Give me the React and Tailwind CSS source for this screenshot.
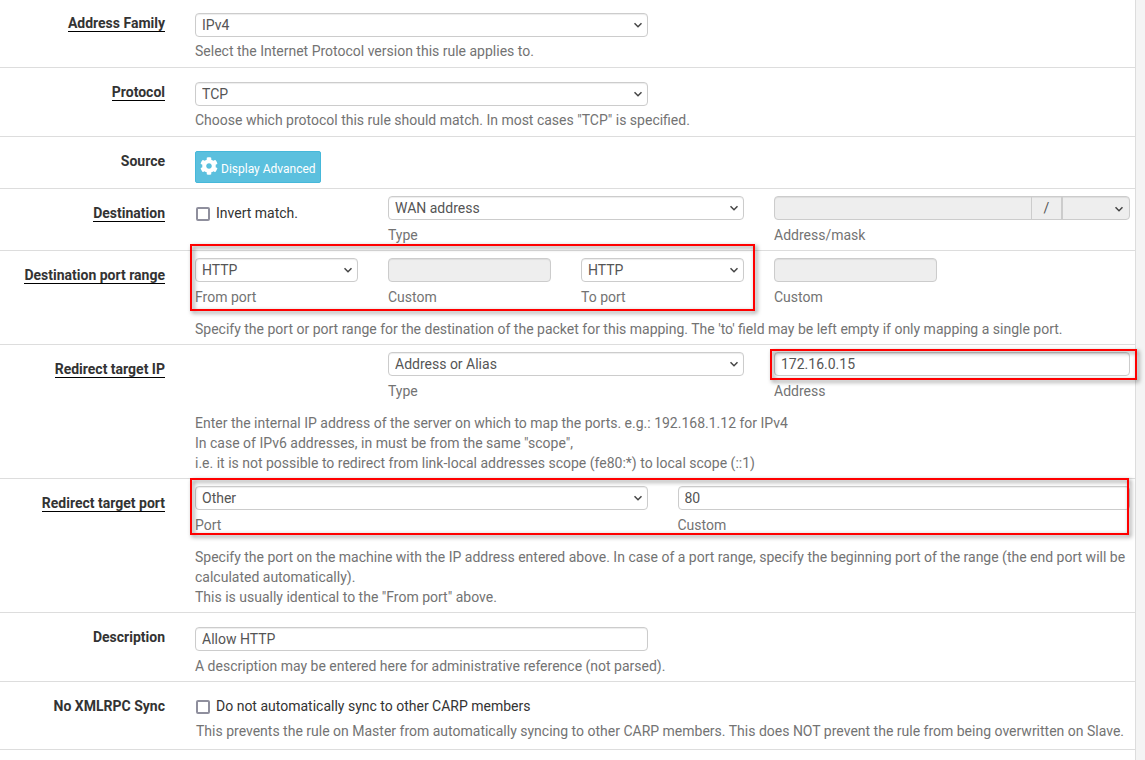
import React from "react";

const fieldBase =
  "block h-6 w-full appearance-none rounded border border-[#ccc] px-1.5 text-sm leading-5 text-[#555] shadow-[inset_0_1px_1px_rgba(0,0,0,0.075)] outline-none";

function Chevron() {
  return (
    <svg
      className="pointer-events-none absolute top-2 right-1.5 h-2 w-2"
      viewBox="0 0 8 8"
      fill="none"
      stroke="#444"
      strokeWidth="1.5"
      aria-hidden="true"
    >
      <path d="M0.5 2.2 L4 5.7 L7.5 2.2" />
    </svg>
  );
}

function Select({ id, value, options, ...rest }) {
  return (
    <div className="relative">
      <select id={id} defaultValue={value} className={`${fieldBase} bg-white`} {...rest}>
        {(options || [value]).map((o) => (
          <option key={o}>{o}</option>
        ))}
      </select>
      <Chevron />
    </div>
  );
}

function Input({ id, disabled, value = "", ...rest }) {
  return (
    <input
      id={id}
      type="text"
      disabled={disabled}
      defaultValue={value}
      className={`${fieldBase} ${disabled ? "bg-[#eee]" : "bg-white"}`}
      {...rest}
    />
  );
}

function Row({ label, htmlFor, required, children, className = "pt-3.5 pb-[5px]" }) {
  const Tag = htmlFor ? "label" : "span";
  return (
    <div className="grid grid-cols-[180px_minmax(0,1fr)] border-b border-[#ddd]">
      <div className="px-[15px] pt-3.5 text-right font-bold text-[#333]">
        <Tag htmlFor={htmlFor} className={required ? "border-b border-black" : ""}>
          {label}
        </Tag>
      </div>
      <div className={`-mr-2.5 ${className}`}>{children}</div>
    </div>
  );
}

function Caption({ htmlFor, children }) {
  return (
    <label htmlFor={htmlFor} className="mt-[5px] block">
      {children}
    </label>
  );
}

function Help({ children }) {
  return <p className="mt-3 px-[15px]">{children}</p>;
}

function Highlight({ className }) {
  return (
    <div
      className={`pointer-events-none absolute z-10 border-2 border-[#f00] drop-shadow-[2px_2px_2px_rgba(0,0,0,0.5)] ${className}`}
    />
  );
}

function Check({ id, children }) {
  return (
    <label htmlFor={id} className="flex items-center gap-1.5 px-4 text-[#333]">
      <input
        id={id}
        type="checkbox"
        className="mt-px size-3.5 shrink-0 appearance-none rounded-[2px] border-2 border-[#8f8f9d] bg-white"
      />
      {children}
    </label>
  );
}

export default function App() {
  return (
    <div className="min-h-screen overflow-hidden bg-[#f4f4f4] pr-[9px] font-['Roboto',sans-serif] text-sm leading-5 text-[#737373]">
      <form className="-mt-px min-h-[calc(100vh+1px)] border-r border-[#ddd] bg-white">
        <Row label="Address Family" htmlFor="family" required>
          <div className="grid grid-cols-10">
            <div className="col-span-5 px-[15px]">
              <Select id="family" value="IPv4" options={["IPv4", "IPv6"]} />
            </div>
          </div>
          <p className="mt-1 px-[15px] pb-px">Select the Internet Protocol version this rule applies to.</p>
        </Row>

        <Row label="Protocol" htmlFor="protocol" required>
          <div className="grid grid-cols-10">
            <div className="col-span-5 px-[15px]">
              <Select id="protocol" value="TCP" options={["TCP", "UDP", "TCP/UDP"]} />
            </div>
          </div>
          <p className="mt-1 px-[15px] pb-px">
            Choose which protocol this rule should match. In most cases "TCP" is specified.
          </p>
        </Row>

        <Row label="Source">
          <div className="px-[15px]">
            <button
              type="button"
              className="flex h-8 items-center gap-[3px] rounded-[2px] border border-[#46b8da] bg-[#5bc0de] px-1 text-xs text-white"
            >
              <svg className="mb-0.5 size-[18px]" viewBox="0 0 512 512" fill="currentColor" aria-hidden="true">
                <path d="M487.4 315.7l-42.6-24.6c4.3-23.2 4.3-47 0-70.2l42.6-24.6c4.9-2.8 7.1-8.6 5.5-14-11.1-35.6-30-67.8-54.7-94.6-3.8-4.1-10-5.1-14.8-2.3L380.8 110c-17.9-15.4-38.5-27.3-60.8-35.1V25.8c0-5.6-3.9-10.5-9.4-11.7-36.7-8.2-74.3-7.8-109.2 0-5.5 1.2-9.4 6.1-9.4 11.7V75c-22.2 7.9-42.8 19.8-60.8 35.1L88.700 85.500c-4.900-2.800-11-1.900-14.800 2.300-24.700 26.700-43.600 58.900-54.700 94.600-1.700 5.400.6 11.200 5.500 14L67.300 221c-4.300 23.200-4.300 47 0 70.200l-42.600 24.600c-4.900 2.800-7.100 8.600-5.500 14 11.100 35.600 30 67.800 54.700 94.600 3.800 4.100 10 5.100 14.800 2.300l42.600-24.600c17.900 15.400 38.500 27.300 60.800 35.100v49.200c0 5.600 3.900 10.500 9.400 11.700 36.700 8.200 74.300 7.800 109.200 0 5.500-1.200 9.400-6.100 9.400-11.700v-49.200c22.200-7.900 42.800-19.800 60.800-35.100l42.600 24.600c4.900 2.800 11 1.900 14.800-2.300 24.700-26.700 43.600-58.900 54.700-94.600 1.500-5.500-.7-11.300-5.600-14.100zM256 336c-44.100 0-80-35.900-80-80s35.900-80 80-80 80 35.900 80 80-35.900 80-80 80z" />
              </svg>
              <span className="mt-1">Display Advanced</span>
            </button>
          </div>
        </Row>

        <Row label="Destination" required className="pt-[7px] pb-[5px]">
          <div className="grid grid-cols-10">
            <div className="col-span-2 pt-[7px]">
              <Check id="invert">Invert match.</Check>
            </div>
            <div className="col-span-4 px-[15px]">
              <Select id="dsttype" value="WAN address" />
              <Caption htmlFor="dsttype">Type</Caption>
            </div>
            <div className="col-span-4 px-[15px]">
              <div className="flex h-6 overflow-hidden rounded border border-[#ccc] bg-[#eee] text-[#555] shadow-[inset_0_1px_1px_rgba(0,0,0,0.075)]">
                <input id="dst" type="text" disabled className="min-w-0 flex-1 px-1.5" />
                <span className="w-8 border-r-2 border-l border-[#ccc] text-center leading-[22px]">/</span>
                <div className="relative w-[66px]">
                  <select aria-label="Mask" disabled className="block h-full w-full appearance-none" />
                  <Chevron />
                </div>
              </div>
              <Caption htmlFor="dst">Address/mask</Caption>
            </div>
          </div>
        </Row>

        <Row label="Destination port range" required className="pt-[7px] pb-[5px]">
          <div className="grid grid-cols-10">
            <div className="relative col-span-6 grid grid-cols-3">
              <div className="px-[15px]">
                <Select id="fromport" value="HTTP" />
                <Caption htmlFor="fromport">From port</Caption>
              </div>
              <div className="px-[15px]">
                <Input id="fromcustom" disabled />
                <Caption htmlFor="fromcustom">Custom</Caption>
              </div>
              <div className="px-[15px]">
                <Select id="toport" value="HTTP" />
                <Caption htmlFor="toport">To port</Caption>
              </div>
              <Highlight className="-top-3.5 right-1 -bottom-1 left-2.5" />
            </div>
            <div className="col-span-2 px-[15px]">
              <Input id="tocustom" disabled />
              <Caption htmlFor="tocustom">Custom</Caption>
            </div>
          </div>
          <Help>
            Specify the port or port range for the destination of the packet for this mapping. The 'to' field may be
            left empty if only mapping a single port.
          </Help>
        </Row>

        <Row label="Redirect target IP" required className="pt-[7px] pb-[5px]">
          <div className="grid grid-cols-10">
            <div className="col-span-4 col-start-3 px-[15px]">
              <Select id="targettype" value="Address or Alias" />
              <Caption htmlFor="targettype">Type</Caption>
            </div>
            <div className="relative col-span-4 px-[15px]">
              <Input id="target" value="172.16.0.15" />
              <Caption htmlFor="target">Address</Caption>
              <Highlight className="-top-[3px] right-2 left-[11px] h-[31px]" />
            </div>
          </div>
          <Help>
            Enter the internal IP address of the server on which to map the ports. e.g.: 192.168.1.12 for IPv4
            <br />
            In case of IPv6 addresses, in must be from the same "scope",
            <br />
            i.e. it is not possible to redirect from link-local addresses scope (fe80:*) to local scope (::1)
          </Help>
        </Row>

        <Row label="Redirect target port" required className="pt-[7px] pb-[5px]">
          <div className="relative grid grid-cols-2">
            <div className="px-[15px]">
              <Select id="targetport" value="Other" />
              <Caption htmlFor="targetport">Port</Caption>
            </div>
            <div className="px-[15px]">
              <Input id="targetcustom" value="80" />
              <Caption htmlFor="targetcustom">Custom</Caption>
            </div>
            <Highlight className="-top-2 right-4 bottom-0 left-2.5" />
          </div>
          <Help>
            Specify the port on the machine with the IP address entered above. In case of a port range, specify the
            beginning port of the range (the end port will be calculated automatically).
            <br />
            This is usually identical to the "From port" above.
          </Help>
        </Row>

        <Row label="Description" htmlFor="descr">
          <div className="grid grid-cols-10">
            <div className="col-span-5 px-[15px]">
              <Input id="descr" value="Allow HTTP" />
            </div>
          </div>
          <p className="mt-[5px] px-[15px]">
            A description may be entered here for administrative reference (not parsed).
          </p>
        </Row>

        <Row label="No XMLRPC Sync" className="pt-3.5 pb-2">
          <Check id="nosync">Do not automatically sync to other CARP members</Check>
          <p className="mt-[5px] px-4">
            This prevents the rule on Master from automatically syncing to other CARP members. This does NOT prevent
            the rule from being overwritten on Slave.
          </p>
        </Row>
      </form>
    </div>
  );
}
